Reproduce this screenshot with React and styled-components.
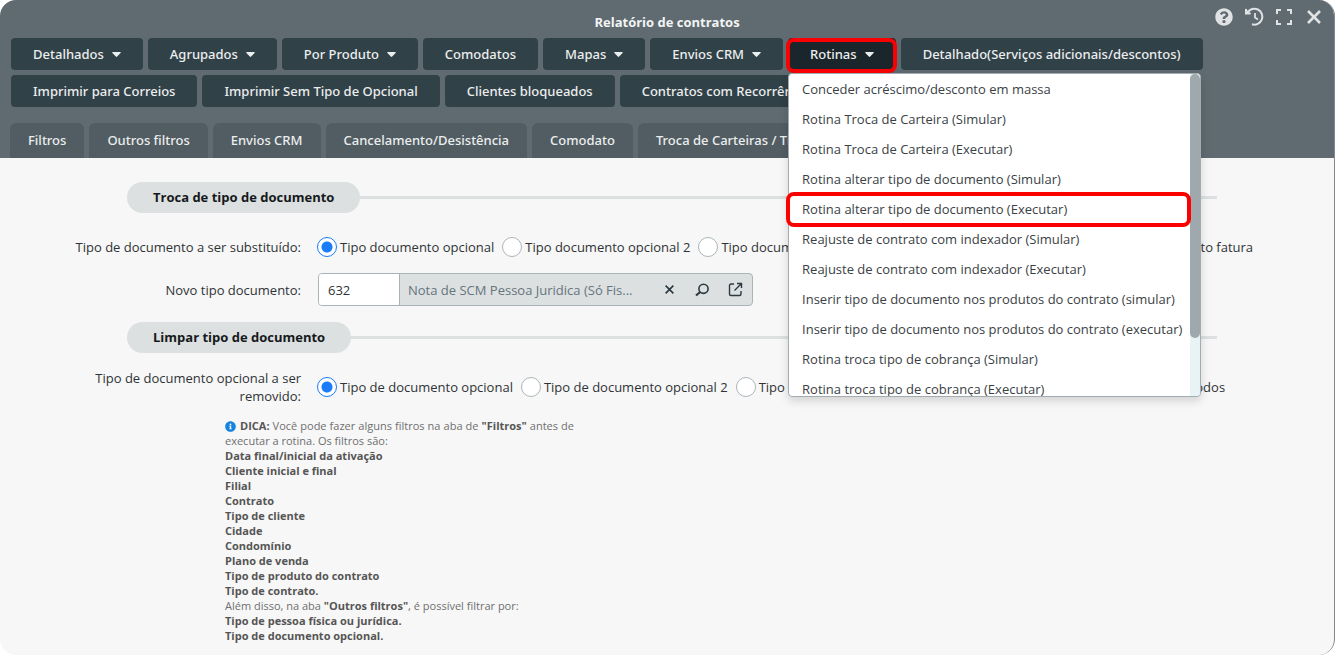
import React, {useState} from 'react'
import styled, {createGlobalStyle, css} from 'styled-components'
import {FaQuestionCircle, FaInfoCircle} from 'react-icons/fa'

const GlobalStyle = createGlobalStyle`
  * {
    box-sizing: border-box;
  }
  body {
    margin: 0;
    background: #fff;
    color: #2f3336;
    font-family: 'Open Sans', 'Noto Sans', sans-serif;
    font-size: 13px;
    line-height: 18px;
  }
  button, input {
    font: inherit;
    color: inherit;
  }
`;
const Window = styled.main`
  min-height: 655px;
  border-right: 1px solid #7d8a8f;
  border-radius: 16px;
  background: #f7f7f7;
  overflow: hidden;
`;
const Header = styled.header`
  background: #5f6b70;
`;
const TitleBar = styled.div`
  position: relative;
  height: 38px;
  padding-top: 13px;
  text-align: center;
`;
const Title = styled.h1`
  margin: 0;
  color: #f3f4f4;
  font-size: 13px;
  line-height: 18px;
  font-weight: 700;
`;
const WindowActions = styled.div`
  position: absolute;
  top: 7px;
  right: 10px;
  display: flex;
  gap: 10px;
`;
const IconButton = styled.button`
  display: flex;
  align-items: center;
  justify-content: center;
  width: 20px;
  height: 20px;
  padding: 0;
  border: 0;
  background: none;
  color: ${props => props.$dark ? '#2b3a40' : '#e0e2e3'};
  cursor: pointer;
`;
const Toolbar = styled.div`
  display: flex;
  flex-wrap: wrap;
  gap: 5px;
  padding: 0 11px;
`;
const ToolButton = styled.button`
  display: flex;
  align-items: center;
  gap: 8px;
  height: 32px;
  padding: 0 22px;
  border: 0;
  border-radius: 4px;
  background: ${props => props.$active ? '#1b262c' : '#314148'};
  color: #eceeee;
  font-family: 'Noto Sans', sans-serif;
  font-weight: 500;
  cursor: pointer;
`;
const MenuAnchor = styled.div`
  position: relative;
`;
const highlight = css`
  &:after {
    content: '';
    position: absolute;
    border: 4px solid #fb0000;
    border-radius: 8px;
    pointer-events: none;
  }
`;
const MenuTrigger = styled.div`
  position: relative;
  ${highlight}
  &:after {
    inset: 0 -1px -3px -2px;
  }
`;
const Menu = styled.div`
  position: absolute;
  z-index: 2;
  top: 35px;
  left: 0;
  display: flex;
  width: 413px;
  height: 324px;
  border: 1px solid #a3adb1;
  border-radius: 4px;
  background: #fff;
  box-shadow: 0 4px 10px rgba(0,0,0,0.15);
`;
const MenuList = styled.ul`
  position: relative;
  z-index: 1;
  flex: 1;
  min-width: 0;
  margin: 0;
  padding: 0;
  list-style: none;
  overflow-x: visible;
  overflow-y: clip;
`;
const MenuItem = styled.li`
  position: relative;
  ${props => props.$marked && highlight}
  &:after {
    inset: -2px -1px -3px -3px;
  }
`;
const MenuLink = styled.a`
  display: block;
  padding: 0 13px;
  color: #3a4145;
  line-height: 30px;
  white-space: nowrap;
  text-decoration: none;
`;
const ScrollTrack = styled.div`
  flex: none;
  width: 10px;
  border-radius: 0 4px 4px 0;
  background: #e8f3f6;
`;
const ScrollThumb = styled.div`
  height: 82%;
  border-radius: 5px;
  background: #9ea8ad;
`;
const Tabs = styled.nav`
  display: flex;
  gap: 5px;
  padding: 16px 10px 0;
`;
const Tab = styled.a`
  height: 35px;
  padding: 0 18px;
  border-radius: 6px 6px 0 0;
  background: #515d63;
  color: #eceeee;
  font-family: 'Noto Sans', sans-serif;
  font-weight: 500;
  line-height: 35px;
  white-space: nowrap;
  text-decoration: none;
`;
const Content = styled.div`
  padding: 24px 0 10px;
`;
const SectionTitle = styled.div`
  display: flex;
  align-items: center;
  margin: 0 117px 16px 127px;
  &:after {
    content: '';
    flex: 1;
    height: 3px;
    background: #dce0e1;
  }
  h2 {
    margin: 0;
    padding: 0 26px;
    border-radius: 16px;
    background: #dce0e1;
    color: #16191b;
    font-size: 13px;
    font-weight: 700;
    line-height: 31px;
  }
`;
const Row = styled.div`
  display: grid;
  grid-template-columns: 226px 1fr;
  column-gap: 16px;
  align-items: center;
  min-height: ${props => props.$field ? 33 : 36}px;
  margin-bottom: ${props => props.$field ? 16 : 8}px;
  padding-left: 75px;
`;
const RowLabel = styled.label`
  text-align: right;
`;
const RadioGroup = styled.div`
  display: flex;
  gap: 8px;
  white-space: nowrap;
`;
const RadioLabel = styled.label`
  display: flex;
  align-items: center;
  gap: 3px;
`;
const Radio = styled.input`
  appearance: none;
  width: 20px;
  height: 20px;
  margin: 0;
  border: 1px solid #abb5b9;
  border-radius: 50%;
  background: #fff;
  &:checked {
    border-color: #1a7cf9;
    background: radial-gradient(circle, #1a7cf9 5px, #fff 6px);
  }
`;
const Field = styled.div`
  display: flex;
  width: 435px;
  height: 33px;
  margin-left: 1px;
  border: 1px solid #a9b4b9;
  border-radius: 4px;
  background: #dce0e1;
  overflow: hidden;
`;
const CodeInput = styled.input`
  width: 81px;
  padding: 0 9px;
  border: 0;
  border-right: 1px solid #a9b4b9;
  background: #fff;
`;
const NameInput = styled.input`
  flex: 1;
  min-width: 0;
  padding: 0 8px;
  border: 0;
  background: none;
  color: #66757c;
`;
const FieldActions = styled.div`
  display: flex;
  align-items: center;
  gap: 13px;
  padding-right: 7px;
`;
const Tip = styled.div`
  width: 349px;
  margin: 13px 0 0 225px;
  color: #6f6f6f;
  font-size: 11px;
  line-height: 15px;
  text-align: justify;
  b {
    color: #555;
  }
  p {
    margin: 0;
  }
  svg {
    margin-right: 4px;
    color: #1583e0;
    vertical-align: -2px;
  }
`;

const buttons = [
    {name: 'Detalhados', menu: true},
    {name: 'Agrupados', menu: true},
    {name: 'Por Produto', menu: true},
    {name: 'Comodatos'},
    {name: 'Mapas', menu: true},
    {name: 'Envios CRM', menu: true},
    {name: 'Rotinas', menu: true, open: true},
    {name: 'Detalhado(Serviços adicionais/descontos)'},
    {name: 'Imprimir para Correios'},
    {name: 'Imprimir Sem Tipo de Opcional'},
    {name: 'Clientes bloqueados'},
    {name: 'Contratos com Recorrência'}
]

const rotinas = [
    'Conceder acréscimo/desconto em massa',
    'Rotina Troca de Carteira (Simular)',
    'Rotina Troca de Carteira (Executar)',
    'Rotina alterar tipo de documento (Simular)',
    'Rotina alterar tipo de documento (Executar)',
    'Reajuste de contrato com indexador (Simular)',
    'Reajuste de contrato com indexador (Executar)',
    'Inserir tipo de documento nos produtos do contrato (simular)',
    'Inserir tipo de documento nos produtos do contrato (executar)',
    'Rotina troca tipo de cobrança (Simular)',
    'Rotina troca tipo de cobrança (Executar)'
]

const tabs = ['Filtros', 'Outros filtros', 'Envios CRM', 'Cancelamento/Desistência', 'Comodato', 'Troca de Carteiras / Tipo de documento']

const substituir = ['Tipo documento opcional', 'Tipo documento opcional 2', 'Tipo documento opcional 3', 'Tipo documento opcional 4', 'Tipo documento fatura']

const remover = ['Tipo de documento opcional', 'Tipo de documento opcional 2', 'Tipo de documento opcional 3', 'Tipo de documento opcional 4', 'Todos']

const filtros = ['Data final/inicial da ativação', 'Cliente inicial e final', 'Filial', 'Contrato', 'Tipo de cliente', 'Cidade', 'Condomínio', 'Plano de venda', 'Tipo de produto do contrato', 'Tipo de contrato.']

const Caret = () => (
    <svg width="9" height="5" viewBox="0 0 9 5" fill="currentColor">
        <path d="M.8 0h7.400c.6 0 .8.6.4 1L5.200 4.600a1 1 0 0 1-1.400 0L.4 1C0 .6.200 0 .8 0z"/>
    </svg>
)

const HistoryIcon = () => (
    <svg width="20" height="20" viewBox="0 0 20 20" fill="none" stroke="currentColor" strokeWidth="2">
        <path d="M3.500 5.500A8 8 0 1 1 8 17.300"/>
        <path d="M1.500 1.500v5.500h5.500" fill="currentColor" stroke="none"/>
        <path d="M2 2v4.500h4.500"/>
        <path d="M11 6v4.500l3 2" strokeWidth="1.800"/>
    </svg>
)

const ExpandIcon = () => (
    <svg width="18" height="18" viewBox="0 0 18 18" fill="none" stroke="currentColor" strokeWidth="2">
        <path d="M2 6V2h4M12 2h4v4M16 12v4h-4M6 16H2v-4"/>
    </svg>
)

const CloseIcon = ({size, width}) => (
    <svg width={size} height={size} viewBox="0 0 14 14" fill="none" stroke="currentColor" strokeWidth={width}>
        <path d="M1 1l12 12M13 1L1 13"/>
    </svg>
)

const SearchIcon = () => (
    <svg width="14" height="14" viewBox="0 0 14 14" fill="none" stroke="currentColor" strokeWidth="1.6">
        <circle cx="8.500" cy="5.800" r="4.600"/>
        <path d="M5.200 9L1 12.500" strokeWidth="2.200"/>
    </svg>
)

const OpenIcon = () => (
    <svg width="15" height="15" viewBox="0 0 15 15" fill="none" stroke="currentColor" strokeWidth="1.4">
        <path d="M6 2H3a1.500 1.500 0 0 0-1.500 1.500V12A1.500 1.500 0 0 0 3 13.500h8.500A1.500 1.500 0 0 0 13 12V9M9 1.500h4.500v4.500M13.500 1.500L6.500 8.500"/>
    </svg>
)

const ToolItem = ({item}) => (
    <ToolButton type="button" $active={item.open} aria-haspopup={item.menu ? 'menu' : undefined}>
        {item.name}
        {item.menu ? <Caret/> : null}
    </ToolButton>
)

const Radios = ({name, label, options}) => {
    const [value, setValue] = useState(options[0])
    return (
        <RadioGroup role="radiogroup" aria-labelledby={label}>
            {options.map(option => (
                <RadioLabel key={option}>
                    <Radio type="radio" name={name} checked={value === option} onChange={() => setValue(option)}/>
                    {option}
                </RadioLabel>
            ))}
        </RadioGroup>
    )
}

const App = () => {
    const [code, setCode] = useState('632')
    return (
        <Window>
            <GlobalStyle/>
            <Header>
                <TitleBar>
                    <Title>Relatório de contratos</Title>
                    <WindowActions>
                        <IconButton type="button" aria-label="Ajuda"><FaQuestionCircle size={18}/></IconButton>
                        <IconButton type="button" aria-label="Histórico"><HistoryIcon/></IconButton>
                        <IconButton type="button" aria-label="Tela cheia"><ExpandIcon/></IconButton>
                        <IconButton type="button" aria-label="Fechar"><CloseIcon size={14} width={2.6}/></IconButton>
                    </WindowActions>
                </TitleBar>
                <Toolbar>
                    {buttons.map(item => item.open
                        ? <MenuAnchor key={item.name}>
                            <MenuTrigger><ToolItem item={item}/></MenuTrigger>
                            <Menu>
                                <MenuList>
                                    {rotinas.map((name, idx) => (
                                        <MenuItem key={name} $marked={idx === 4}>
                                            <MenuLink href="#">{name}</MenuLink>
                                        </MenuItem>
                                    ))}
                                </MenuList>
                                <ScrollTrack><ScrollThumb/></ScrollTrack>
                            </Menu>
                        </MenuAnchor>
                        : <ToolItem key={item.name} item={item}/>
                    )}
                </Toolbar>
                <Tabs>
                    {tabs.map(name => <Tab key={name} href="#">{name}</Tab>)}
                </Tabs>
            </Header>
            <Content>
                <SectionTitle><h2>Troca de tipo de documento</h2></SectionTitle>
                <Row>
                    <RowLabel as="span" id="lbl-substituir">Tipo de documento a ser substituído:</RowLabel>
                    <Radios name="substituir" label="lbl-substituir" options={substituir}/>
                </Row>
                <Row $field>
                    <RowLabel htmlFor="novo-tipo">Novo tipo documento:</RowLabel>
                    <Field>
                        <CodeInput id="novo-tipo" value={code} onChange={e => setCode(e.target.value)}/>
                        <NameInput aria-label="Descrição do tipo de documento" readOnly value="Nota de SCM Pessoa Juridica (Só Fis..."/>
                        <FieldActions>
                            <IconButton $dark type="button" aria-label="Limpar"><CloseIcon size={9} width={2.6}/></IconButton>
                            <IconButton $dark type="button" aria-label="Pesquisar"><SearchIcon/></IconButton>
                            <IconButton $dark type="button" aria-label="Abrir"><OpenIcon/></IconButton>
                        </FieldActions>
                    </Field>
                </Row>
                <SectionTitle><h2>Limpar tipo de documento</h2></SectionTitle>
                <Row>
                    <RowLabel as="span" id="lbl-remover">Tipo de documento opcional a ser removido:</RowLabel>
                    <Radios name="remover" label="lbl-remover" options={remover}/>
                </Row>
                <Tip>
                    <p><FaInfoCircle size={11}/><b>DICA:</b> Você pode fazer alguns filtros na aba de <b>"Filtros"</b> antes de executar a rotina. Os filtros são:</p>
                    {filtros.map(name => <p key={name}><b>{name}</b></p>)}
                    <p>Além disso, na aba <b>"Outros filtros"</b>, é possível filtrar por:</p>
                    <p><b>Tipo de pessoa física ou jurídica.</b></p>
                    <p><b>Tipo de documento opcional.</b></p>
                </Tip>
            </Content>
        </Window>
    )
}

export default App
